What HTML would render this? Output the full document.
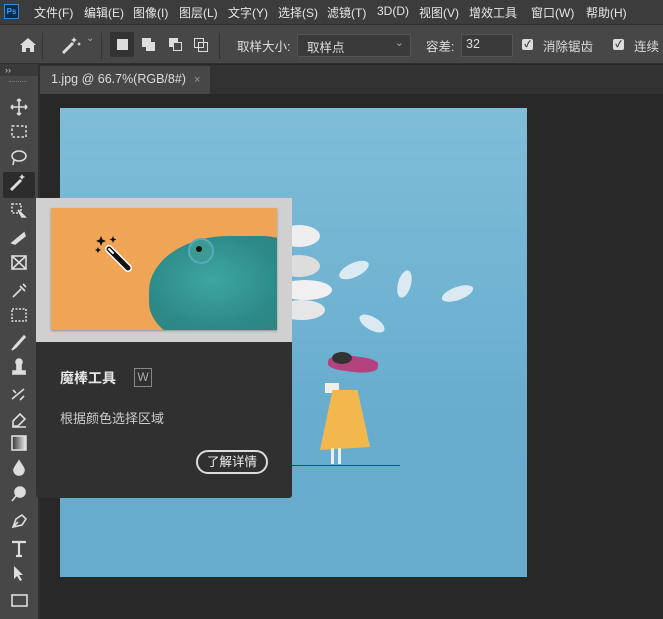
<!DOCTYPE html>
<html><head><meta charset="utf-8"><style>
*{margin:0;padding:0;box-sizing:border-box}
body{width:663px;height:619px;overflow:hidden;background:#282828;font-family:"Liberation Sans","Noto Sans CJK SC",sans-serif;position:relative;color:#ddd}
.a{position:absolute}
.menu{left:0;top:0;width:663px;height:24px;background:#3c3c3c}
.menu span{position:absolute;top:4px;font-size:12px;color:#e6e6e6;white-space:nowrap}
.opt{left:0;top:24px;width:663px;height:40px;background:#474747;border-top:1px solid #2e2e2e;border-bottom:1px solid #2e2e2e}
.opt .t{position:absolute;font-size:12.5px;color:#ddd;top:11px;white-space:nowrap}
.sep{position:absolute;top:8px;width:1px;height:26px;background:#333}
.tb{left:0;top:64px;width:38px;height:555px;background:#474747}
</style></head><body>
<div class="a menu">
 <div class="a" style="left:4px;top:4px;width:15px;height:15px;background:#0c2a4a;border:1px solid #2d8ce0;color:#2fa3f5;font-size:8px;font-weight:bold;line-height:13px;text-align:center">Ps</div>
 <span style="left:34px">文件(F)</span><span style="left:84px">编辑(E)</span><span style="left:133px">图像(I)</span><span style="left:179px">图层(L)</span><span style="left:228px">文字(Y)</span><span style="left:278px">选择(S)</span><span style="left:327px">滤镜(T)</span><span style="left:377px">3D(D)</span><span style="left:419px">视图(V)</span><span style="left:469px">增效工具</span><span style="left:531px">窗口(W)</span><span style="left:586px">帮助(H)</span>
</div>
<div class="a opt">
 <svg class="a" style="left:19px;top:12px" width="18" height="16" viewBox="0 0 18 16"><path d="M9 1L1 8h2v7h4v-4h4v4h4V8h2z" fill="#ddd"/></svg>
 <div class="sep" style="left:42px"></div>
 <svg class="a" style="left:60px;top:9px" width="24" height="22" viewBox="0 0 24 22"><path d="M3 19L13 9" stroke="#ddd" stroke-width="3"/><path d="M14 3l1 2 2 1-2 1-1 2-1-2-2-1 2-1zM19 8l.7 1.3 1.3.7-1.3.7L19 12l-.7-1.3L17 10l1.3-.7z" fill="#ddd"/></svg>
 <div class="t" style="left:86px;top:8px;font-size:10px;color:#aaa">⌄</div>
 <div class="sep" style="left:101px"></div>
 <div class="a" style="left:110px;top:7px;width:24px;height:25px;background:#333;border-radius:2px"></div>
 <div class="a" style="left:117px;top:14px;width:11px;height:11px;background:#ddd"></div>
 <div class="a" style="left:142px;top:13px;width:9px;height:9px;background:#ddd"></div><div class="a" style="left:146px;top:17px;width:9px;height:9px;background:#ddd"></div>
 <div class="a" style="left:169px;top:13px;width:9px;height:9px;background:#ddd"></div><div class="a" style="left:173px;top:17px;width:9px;height:9px;border:1.5px solid #ddd;background:#474747"></div>
 <div class="a" style="left:194px;top:13px;width:10px;height:10px;border:1.5px solid #ddd"></div><div class="a" style="left:198px;top:17px;width:10px;height:10px;border:1.5px solid #ddd"></div>
 <div class="sep" style="left:219px"></div>
 <div class="t" style="left:237px">取样大小:</div>
 <div class="a" style="left:297px;top:9px;width:114px;height:23px;background:#3a3a3a;border:1px solid #555;border-radius:2px"><span style="position:absolute;left:9px;top:2px;font-size:12.5px">取样点</span><span style="position:absolute;right:6px;top:1px;font-size:11px;color:#aaa">⌄</span></div>
 <div class="t" style="left:426px">容差:</div>
 <div class="a" style="left:461px;top:9px;width:52px;height:23px;background:#3a3a3a;border:1px solid #555"><span style="position:absolute;left:4px;top:2px;font-size:12.5px">32</span></div>
 <div class="a" style="left:522px;top:14px;width:11px;height:11px;background:#ddd;border-radius:2px;color:#333;font-size:9px;line-height:11px;text-align:center;font-weight:bold">✓</div>
 <div class="t" style="left:543px">消除锯齿</div>
 <div class="a" style="left:613px;top:14px;width:11px;height:11px;background:#ddd;border-radius:2px;color:#333;font-size:9px;line-height:11px;text-align:center;font-weight:bold">✓</div>
 <div class="t" style="left:634px">连续</div>
</div>
<div class="a" style="left:40px;top:65px;width:623px;height:29px;background:#323232"></div>
<div class="a" style="left:40px;top:66px;width:170px;height:28px;background:#474747;font-size:12.5px;color:#ddd;padding:6px 0 0 11px">1.jpg @ 66.7%(RGB/8#)<span style="color:#999;margin-left:8px;font-size:11px">×</span></div>
<div class="a" style="left:40px;top:94px;width:623px;height:525px;background:#282828"></div>
<div class="a tb"></div>
<div class="a" style="left:0;top:64px;width:38px;height:12px;background:#3a3a3a;color:#ccc;font-size:9px;padding-left:5px;line-height:12px">››</div>
<div class="a" style="left:38px;top:64px;width:2px;height:555px;background:#2e2e2e"></div>
<div class="a" style="left:9px;top:81px;width:18px;height:3px;border-top:1px dotted #777"></div>
<div class="a" style="left:3px;top:172px;width:32px;height:26px;background:#2c2c2c;border-radius:2px"></div>
<svg class="a" style="left:0;top:90px" width="38" height="529" viewBox="0 0 38 529" fill="none" stroke="#ddd" stroke-width="1.6">
 <path d="M19 9v16M11 17h16M19 9l-2 2M19 9l2 2M19 25l-2-2M19 25l2-2M11 17l2-2M11 17l2 2M27 17l-2-2M27 17l-2 2"/>
 <rect x="12" y="36" width="14" height="11" stroke-dasharray="2.5 2"/>
 <ellipse cx="19" cy="66" rx="7" ry="5"/><path d="M14 70l-1 5"/>
 <path d="M11 100l10-10" stroke-width="3"/><path d="M22 84l1 2 2 1-2 1-1 2-1-2-2-1 2-1z" fill="#ddd" stroke="none"/>
 <rect x="12" y="114" width="9" height="9" stroke-dasharray="2 1.5"/><path d="M18 120l7 7-3 0z" fill="#ddd"/>
 <path d="M12 153l12-10 1 3-10 8z" fill="#ddd"/>
 <rect x="12" y="166" width="14" height="13"/><path d="M12 166l14 13M26 166l-14 13"/>
 <path d="M13 207l8-8M20 196l5 5M23 194l3 3"/>
 <rect x="12" y="219" width="14" height="12" stroke-dasharray="2 1.5"/>
 <path d="M12 260l3-4 9-10 1 1-9 10z" fill="#ddd"/>
 <path d="M12 284h14M13 281h12v3H13zM17 274h4v7h-4z" fill="#ddd"/><circle cx="19" cy="272" r="3" fill="#ddd"/>
 <path d="M12 309l12-10M13 300l3 3M20 310l4-4"/>
 <path d="M13 331l7-7 5 5-7 7h-5z M12 337h14"/>
 <rect x="12" y="346" width="14" height="14" fill="url(#g)"/>
 <path d="M19 371c-3 5-5 7-5 9a5 5 0 0 0 10 0c0-2-2-4-5-9z" fill="#ddd"/>
 <circle cx="20" cy="402" r="5" fill="#ddd"/><path d="M16 406l-4 5"/>
 <path d="M13 437l3-8 6-4 4 4-4 6z M13 437l5-5"/>
 <path d="M12 452h14M19 452v14M16 466h6" stroke-width="2.2"/>
 <path d="M14 476v13l3-3 3 5 2-1-3-5h4z" fill="#ddd" stroke="none"/>
 <rect x="12" y="505" width="15" height="11"/>
 <defs><linearGradient id="g"><stop offset="0" stop-color="#333"/><stop offset="1" stop-color="#eee"/></linearGradient></defs>
</svg>
<div class="a" style="left:60px;top:108px;width:467px;height:469px;background:linear-gradient(#7fbdd8,#6aaecf 60%,#63a8cb)"></div>
<div class="a" style="left:60px;top:465px;width:467px;height:112px;background:#68accd"></div>
<div class="a" style="left:290px;top:465px;width:110px;height:1px;background:#445"></div>
<div class="a" style="left:278px;top:225px;width:42px;height:22px;background:#eee;border-radius:50%"></div>
<div class="a" style="left:278px;top:255px;width:42px;height:22px;background:#ddd;border-radius:50%"></div>
<div class="a" style="left:278px;top:280px;width:54px;height:20px;background:#f0f0f0;border-radius:50%"></div>
<div class="a" style="left:278px;top:300px;width:47px;height:20px;background:#e6e6e6;border-radius:50%"></div>
<div class="a" style="left:338px;top:263px;width:32px;height:14px;background:#dbe9f2;border-radius:50%;transform:rotate(-25deg)"></div>
<div class="a" style="left:398px;top:270px;width:13px;height:28px;background:#dbe9f2;border-radius:50%;transform:rotate(15deg)"></div>
<div class="a" style="left:441px;top:287px;width:33px;height:13px;background:#dbe9f2;border-radius:50%;transform:rotate(-20deg)"></div>
<div class="a" style="left:358px;top:317px;width:28px;height:13px;background:#dbe9f2;border-radius:50%;transform:rotate(30deg)"></div>
<div class="a" style="left:328px;top:356px;width:50px;height:16px;background:#b3437f;border-radius:50% 30% 50% 30%;transform:rotate(8deg)"></div>
<div class="a" style="left:332px;top:352px;width:20px;height:12px;background:#333;border-radius:50%"></div>
<div class="a" style="left:325px;top:383px;width:14px;height:10px;background:#f2eee8"></div>
<div class="a" style="left:320px;top:390px;width:50px;height:60px;background:#f2b84e;clip-path:polygon(25% 0,75% 0,100% 95%,0 100%)"></div>
<div class="a" style="left:331px;top:448px;width:3px;height:16px;background:#eee"></div>
<div class="a" style="left:338px;top:448px;width:3px;height:16px;background:#eee"></div>
<div class="a" style="left:36px;top:198px;width:256px;height:300px;background:#303030;border-radius:0 0 3px 3px"></div>
<div class="a" style="left:36px;top:198px;width:256px;height:144px;background:#d0d0d0"></div>
<div class="a" style="left:51px;top:208px;width:226px;height:122px;background:#f0a456;box-shadow:0 1px 2px rgba(0,0,0,.3);overflow:hidden">
 <svg class="a" style="left:42px;top:24px" width="40" height="40" viewBox="0 0 40 40"><path d="M8 4l1.5 3.5L13 9l-3.5 1.5L8 14l-1.5-3.5L3 9l3.5-1.5zM20 4l1 2.5 2.5 1-2.5 1-1 2.5-1-2.5-2.5-1 2.5-1zM5 15l1 2 2 1-2 1-1 2-1-2-2-1 2-1z" fill="#111"/><path d="M16 17l19 19" stroke="#fff" stroke-width="8" stroke-linecap="round"/><path d="M16 17l19 19" stroke="#111" stroke-width="5" stroke-linecap="round"/><path d="M16 17l4 4" stroke="#fff" stroke-width="2" stroke-linecap="round"/></svg>
 <div class="a" style="left:98px;top:28px;width:160px;height:110px;background:radial-gradient(ellipse at 40% 40%,#3fa6a0,#2b8a88 50%,#3a7a70);border-radius:50% 30% 0 40%"></div>
 <div class="a" style="left:137px;top:30px;width:26px;height:26px;border-radius:50%;background:#3c9a92;border:2px solid #5ab"></div>
 <div class="a" style="left:145px;top:38px;width:6px;height:6px;border-radius:50%;background:#111"></div>
</div>
<div class="a" style="left:60px;top:368px;font-size:14px;font-weight:bold;color:#e6e6e6">魔棒工具</div>
<div class="a" style="left:134px;top:368px;width:18px;height:19px;border:1px solid #888;color:#aaa;font-size:12px;text-align:center;line-height:17px">W</div>
<div class="a" style="left:60px;top:408px;font-size:13px;color:#ccc">根据颜色选择区域</div>
<div class="a" style="left:196px;top:450px;width:72px;height:24px;border:2px solid #ddd;border-radius:12px;font-size:12.5px;color:#eee;text-align:center;line-height:20px">了解详情</div>
</body></html>
